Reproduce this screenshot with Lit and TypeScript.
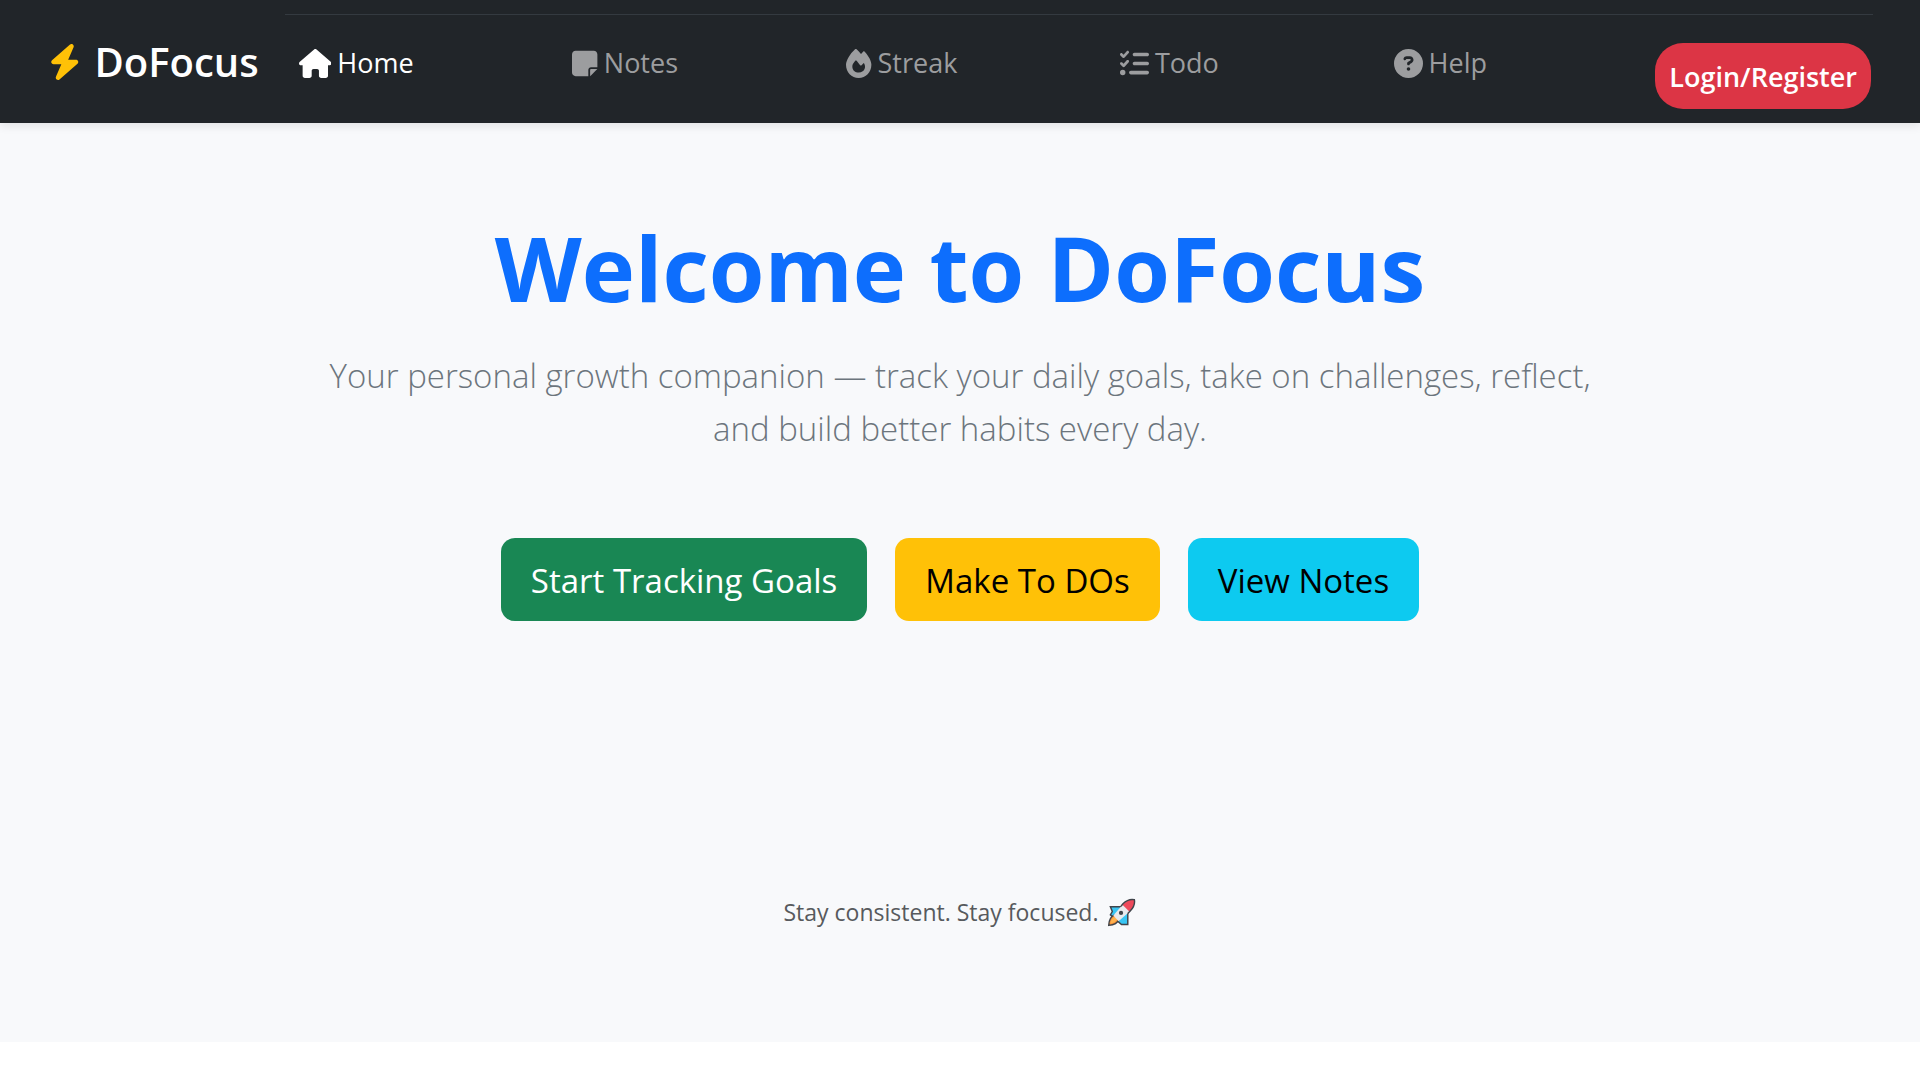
import { LitElement, html, css, svg } from "lit";
import { customElement, property } from "lit/decorators.js";

interface Glyph {
  width: number;
  path: string;
}

const GLYPHS: Record<string, Glyph> = {
  bolt: {
    width: 448,
    path: "M349.4 44.6c5.9-13.7 1.5-29.7-10.6-38.5s-28.6-8-39.9 1.8l-256 224c-10 8.8-13.6 22.9-8.9 35.3S50.7 288 64 288H175.5L98.6 467.4c-5.9 13.7-1.5 29.7 10.6 38.5s28.6 8 39.9-1.8l256-224c10-8.8 13.6-22.9 8.9-35.3s-16.6-20.7-30-20.7H272.5L349.4 44.6z",
  },
  home: {
    width: 576,
    path: "M575.8 255.5c0 18-15 32.1-32 32.1h-32l.7 160.2c0 2.7-.2 5.4-.5 8.1V472c0 22.1-17.9 40-40 40H456c-1.1 0-2.2 0-3.3-.1c-1.4 .1-2.8 .1-4.2 .1H416 392c-22.1 0-40-17.9-40-40V448 384c0-17.7-14.3-32-32-32H256c-17.7 0-32 14.3-32 32v64 24c0 22.1-17.9 40-40 40H160 128.1c-1.5 0-3-.1-4.5-.2c-1.2 .1-2.4 .2-3.6 .2H104c-22.1 0-40-17.9-40-40V360c0-.9 0-1.9 .1-2.8V287.6H32c-18 0-32-14-32-32.1c0-9 3-17 10-24L266.4 8c7-7 15-8 22-8s15 2 21 7L564.8 231.5c8 7 12 15 11 24z",
  },
  note: {
    width: 448,
    path: "M64 32C28.7 32 0 60.7 0 96V416c0 35.3 28.7 64 64 64H288V368c0-26.5 21.5-48 48-48H448V96c0-35.3-28.7-64-64-64H64zM448 352H402.7 336c-8.8 0-16 7.2-16 16v66.7V480l32-32 64-64 32-32z",
  },
  fire: {
    width: 448,
    path: "M159.3 5.4c7.8-7.3 19.9-7.2 27.7 .1c27.6 25.9 53.5 53.8 77.7 84c11-14.4 23.5-30.1 37-42.9c7.9-7.4 20.1-7.4 28 .1c34.6 33 63.9 76.6 84.5 118c20.3 40.8 33.8 82.5 33.8 111.9C448 404.2 348.2 512 224 512C98.4 512 0 404.1 0 276.5c0-38.4 17.8-85.3 45.4-131.7C73.3 97.7 112.7 48.6 159.3 5.4zM225.7 416c25.3 0 47.7-7 68.8-21c42.1-29.4 53.4-88.2 28.1-134.4c-4.5-9-16-9.6-22.5-2l-25.2 29.3c-6.6 7.6-18.5 7.4-24.7-.5c-16.5-21-46-58.5-62.8-79.8c-6.3-8-18.3-8.1-24.7-.1c-33.8 42.5-50.8 69.3-50.8 99.4C112 375.4 162.6 416 225.7 416z",
  },
  list: {
    width: 512,
    path: "M152.1 38.2c9.9 8.9 10.7 24 1.8 33.9l-72 80c-4.4 4.9-10.6 7.8-17.2 7.9s-12.9-2.4-17.6-7L7 113C-2.3 103.6-2.3 88.4 7 79s24.6-9.4 33.9 0l22.1 22.1 55.1-61.2c8.9-9.9 24-10.7 33.9-1.8zm0 160c9.9 8.9 10.7 24 1.8 33.9l-72 80c-4.4 4.9-10.6 7.8-17.2 7.9s-12.9-2.4-17.6-7L7 273c-9.4-9.4-9.4-24.6 0-33.9s24.6-9.4 33.9 0l22.1 22.1 55.1-61.2c8.9-9.9 24-10.7 33.9-1.8zM224 96c0-17.7 14.3-32 32-32H480c17.7 0 32 14.3 32 32s-14.3 32-32 32H256c-17.7 0-32-14.3-32-32zm0 160c0-17.7 14.3-32 32-32H480c17.7 0 32 14.3 32 32s-14.3 32-32 32H256c-17.7 0-32-14.3-32-32zM160 416c0-17.7 14.3-32 32-32H480c17.7 0 32 14.3 32 32s-14.3 32-32 32H192c-17.7 0-32-14.3-32-32zM48 368a48 48 0 1 1 0 96 48 48 0 1 1 0-96z",
  },
  help: {
    width: 512,
    path: "M256 512A256 256 0 1 0 256 0a256 256 0 1 0 0 512zM169.8 165.3c7.9-22.3 29.1-37.3 52.8-37.3h58.3c34.9 0 63.1 28.3 63.1 63.1c0 22.6-12.1 43.5-31.7 54.8L280 264.4c-.2 13-10.9 23.6-24 23.6c-13.3 0-24-10.7-24-24V250.5c0-8.6 4.6-16.5 12.1-20.8l44.3-25.4c4.7-2.7 7.6-7.7 7.6-13.1c0-8.4-6.8-15.1-15.1-15.1H222.6c-3.4 0-6.4 2.1-7.5 5.3l-.4 1.2c-4.4 12.5-18.2 19-30.6 14.6s-19-18.2-14.6-30.6l.4-1.2zM224 352a32 32 0 1 1 64 0 32 32 0 1 1 -64 0z",
  },
};

const NAV_ITEMS = [
  { label: "Home", icon: "home", active: true },
  { label: "Notes", icon: "note", active: false },
  { label: "Streak", icon: "fire", active: false },
  { label: "Todo", icon: "list", active: false },
  { label: "Help", icon: "help", active: false },
];

const ACTIONS = [
  { label: "Start Tracking Goals", tone: "success" },
  { label: "Make To DOs", tone: "warning" },
  { label: "View Notes", tone: "info" },
];

@customElement("app-icon")
export class AppIcon extends LitElement {
  @property() name = "home";

  static styles = css`
    :host {
      display: block;
      flex: none;
    }
    .glyph {
      display: block;
      height: var(--icon-size, 29px);
      width: auto;
      fill: currentColor;
    }
  `;

  render() {
    const glyph = GLYPHS[this.name];
    return html`<svg class="glyph" viewBox="0 0 ${glyph.width} 512" aria-hidden="true">
      ${svg`<path d=${glyph.path}></path>`}
    </svg>`;
  }
}

@customElement("nav-bar")
export class NavBar extends LitElement {
  static styles = css`
    :host {
      display: block;
      position: relative;
    }
    .bar {
      display: flex;
      align-items: flex-start;
      gap: 26px;
      padding: 14px 47px 14px 49px;
      background: #212529;
      box-shadow: 0 4px 8px rgba(0, 0, 0, 0.08);
    }
    .brand {
      display: flex;
      align-items: center;
      gap: 14px;
      padding: 20px 0;
      color: #fff;
      font-size: 40px;
      font-weight: 600;
      line-height: 55px;
      text-decoration: none;
    }
    .brand app-icon {
      --icon-size: 36px;
      color: #ffc107;
    }
    .links {
      flex: 1;
      display: grid;
      grid-template-columns: repeat(5, minmax(0, 1fr)) auto;
      margin: 0;
      padding: 0;
      list-style: none;
      border-top: 1px solid #343a40;
    }
    .item {
      padding-top: 27px;
    }
    .link {
      display: inline-flex;
      align-items: center;
      gap: 6px;
      padding: 0 14px;
      color: #9c9d9f;
      font-size: 27px;
      line-height: 42px;
      text-decoration: none;
    }
    .link.active {
      color: #fff;
    }
    .login {
      display: block;
      margin: 28px 2px 0;
      padding: 13px 14px 11px;
      border: 0;
      border-radius: 28px;
      background: #dc3545;
      color: #fff;
      font-family: inherit;
      font-size: 27px;
      font-weight: 600;
      line-height: 42px;
      cursor: pointer;
    }
  `;

  render() {
    return html`
      <header class="bar">
        <a class="brand" href="#"><app-icon name="bolt"></app-icon>DoFocus</a>
        <ul class="links">
          ${NAV_ITEMS.map(
            (item) => html`<li class="item">
              <a class="link ${item.active ? "active" : ""}" href="#">
                <app-icon name=${item.icon}></app-icon>${item.label}
              </a>
            </li>`
          )}
          <li><button class="login" type="button">Login/Register</button></li>
        </ul>
      </header>
    `;
  }
}

@customElement("app-root")
export class AppRoot extends LitElement {
  static styles = css`
    :host {
      display: block;
      min-height: 100vh;
      background: #fff;
      font-family: "Open Sans", "Noto Sans", "Segoe UI", sans-serif;
    }
    nav-bar {
      z-index: 1;
    }
    .hero {
      display: flex;
      flex-direction: column;
      align-items: center;
      padding: 84px 48px 110px;
      background: #f8f9fb;
      text-align: center;
    }
    .title {
      margin: 0 0 22px;
      color: #0d6efd;
      font-size: 90px;
      font-weight: 700;
      line-height: 120px;
    }
    .lead {
      max-width: 1300px;
      margin: 0 0 83px;
      color: #6c757d;
      font-size: 33px;
      font-weight: 300;
      line-height: 53px;
    }
    .actions {
      display: flex;
      flex-wrap: wrap;
      justify-content: center;
      gap: 28px;
    }
    .action {
      padding: 15px 30px 13px;
      border: 0;
      border-radius: 14px;
      font-family: inherit;
      font-size: 33px;
      line-height: 55px;
      cursor: pointer;
    }
    .success {
      background: #198754;
      color: #fff;
    }
    .warning {
      background: #ffc107;
      color: #000;
    }
    .info {
      background: #0dcaf0;
      color: #000;
    }
    .motto {
      display: flex;
      align-items: center;
      gap: 9px;
      margin: 271px 0 0;
      color: #575a5d;
      font-size: 23px;
      line-height: 40px;
    }
    .rocket {
      width: 29px;
      height: 29px;
    }
  `;

  render() {
    return html`
      <nav-bar></nav-bar>
      <main class="hero">
        <h1 class="title">Welcome to DoFocus</h1>
        <p class="lead">
          Your personal growth companion — track your daily goals, take on challenges, reflect, and
          build better habits every day.
        </p>
        <div class="actions">
          ${ACTIONS.map(
            (action) =>
              html`<button class="action ${action.tone}" type="button">${action.label}</button>`
          )}
        </div>
        <p class="motto">
          Stay consistent. Stay focused.
          <svg class="rocket" viewBox="0 0 30 30" role="img" aria-label="Rocket">
            <path
              d="M3.500 9H16L21.500 14V27.500H15L3.500 17.500L5.500 14z"
              fill="#39c5f3"
              stroke="#40444a"
              stroke-width="1.500"
            />
            <path
              d="M8 17.500C4 19 2 22.500 1.800 28.300 7 28 11 26 12.500 22z"
              fill="#f8923a"
              stroke="#40444a"
              stroke-width="1.500"
            />
            <path d="M8 19.500C5.500 20.500 4 23 3.500 26.500 7 26 9 25 10.500 22z" fill="#ffb24d" />
            <path d="M6.500 18L17 6l7 7.500L12 24z" fill="#e9e9ec" />
            <path d="M16 7C20 2.500 25 1 28.300 1.700 29 5.500 27.500 10 23 14z" fill="#ee4a5b" />
            <path
              d="M14.500 8.500L16.500 6C20 2.500 25 1 28.300 1.700 29 5.500 27.500 10 24 13.500L21.500 16"
              fill="none"
              stroke="#40444a"
              stroke-width="1.500"
            />
            <circle cx="14.500" cy="15.500" r="2.200" fill="#40444a" />
          </svg>
        </p>
      </main>
    `;
  }
}
